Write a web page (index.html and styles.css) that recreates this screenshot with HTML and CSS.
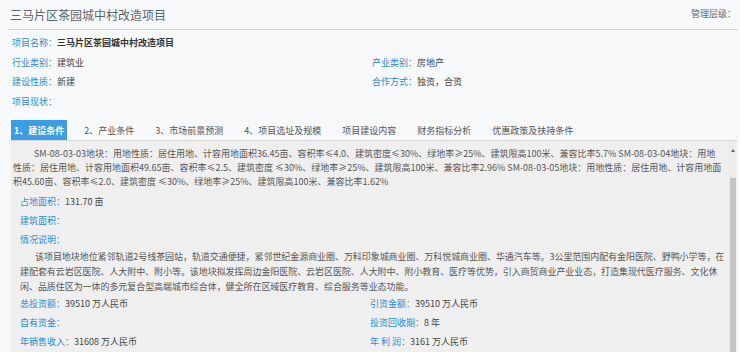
FILE: index.html
```html
<!DOCTYPE html>
<html lang="zh-CN">
<head>
	<meta charset="utf-8">
	<title>三马片区茶园城中村改造项目</title>
	<link rel="stylesheet" href="styles.css">
</head>
<body>
	<div class="page">
		<div class="head">
			<h1 class="title">三马片区茶园城中村改造项目</h1>
			<span class="level">管理层级：</span>
		</div>

		<div class="info">
			<div class="field wide"><span class="lbl">项目名称：</span><span class="val strong">三马片区茶园城中村改造项目</span></div>
			<div class="field"><span class="lbl">行业类别：</span><span class="val">建筑业</span></div>
			<div class="field"><span class="lbl">产业类别：</span><span class="val">房地产</span></div>
			<div class="field"><span class="lbl">建设性质：</span><span class="val">新建</span></div>
			<div class="field"><span class="lbl">合作方式：</span><span class="val">独资，合资</span></div>
			<div class="field wide"><span class="lbl">项目现状：</span></div>
		</div>

		<div class="tabs">
			<span class="tab active">1、建设条件</span>
			<span class="tab">2、产业条件</span>
			<span class="tab">3、市场前景预测</span>
			<span class="tab">4、项目选址及规模</span>
			<span class="tab">项目建设内容</span>
			<span class="tab">财务指标分析</span>
			<span class="tab">优惠政策及扶持条件</span>
		</div>

		<div class="panel">
			<div class="panel-body">
				<p class="plots">SM-08-03-03地块：用地性质：居住用地、计容用地面积36.45亩、容积率≤4.0、建筑密度≤30%、绿地率≥25%、建筑限高100米、兼容比率5.7% SM-08-03-04地块：用地性质：居住用地、计容用地面积49.65亩、容积率≤2.5、建筑密度 ≤30%、绿地率≥25%、建筑限高100米、兼容比率2.96% SM-08-03-05地块：用地性质：居住用地、计容用地面积45.60亩、容积率≤2.0、建筑密度 ≤30%、绿地率≥25%、建筑限高100米、兼容比率1.62%</p>

				<div class="fields">
					<div class="field wide"><span class="lbl">占地面积：</span><span class="val">131.70 亩</span></div>
					<div class="field wide"><span class="lbl">建筑面积：</span></div>
					<div class="field wide"><span class="lbl">情况说明：</span></div>
				</div>

				<p class="desc">该项目地块地位紧邻轨道2号线茶园站，轨道交通便捷，紧邻世纪金源商业圈、万科印象城商业圈、万科悦城商业圈、华通汽车等。3公里范围内配有金阳医院、野鸭小学等，在建配套有云岩区医院、人大附中、附小等。该地块拟发挥周边金阳医院、云岩区医院、人大附中、附小教育、医疗等优势，引入商贸商业产业业态，打造集现代医疗服务、文化休闲、品质住区为一体的多元复合型高端城市综合体，健全所在区域医疗教育、综合服务等业态功能。</p>

				<div class="fields">
					<div class="field"><span class="lbl">总投资额：</span><span class="val">39510 万人民币</span></div>
					<div class="field"><span class="lbl">引资金额：</span><span class="val">39510 万人民币</span></div>
					<div class="field"><span class="lbl">自有资金：</span></div>
					<div class="field"><span class="lbl">投资回收期：</span><span class="val">8 年</span></div>
					<div class="field"><span class="lbl">年销售收入：</span><span class="val">31608 万人民币</span></div>
					<div class="field"><span class="lbl">年 利 润：</span><span class="val">3161 万人民币</span></div>
				</div>
			</div>
			<div class="scrollbar">
				<div class="sb-arrow"></div>
				<div class="sb-thumb"></div>
			</div>
		</div>
	</div>
</body>
</html>
```

FILE: styles.css
```css
html, body {
	margin: 0px;
	padding: 0px;
	width: 100%;
	height: 100%;
	overflow: hidden;
}

body {
	background-color: #f7f8f9;
	font-family: "Noto Sans CJK SC", "Noto Sans", sans-serif;
	font-size: 9px;
	color: #444;
}

.page {
	padding: 0px 3px 0px 8px;
}

/* header */
.head {
	display: flex;
	justify-content: space-between;
	align-items: center;
	height: 29px;
	border-bottom: 1px solid #c9d3dd;
	padding: 0px 1px 0px 2px;
}

.title {
	margin: 0px;
	font-size: 12px;
	font-weight: normal;
	line-height: 29px;
	color: #5a6570;
}

.level {
	color: #666;
	margin-bottom: 2px;
}

/* fields */
.info {
	display: grid;
	grid-template-columns: 360px 1fr;
	padding: 3px 0px 0px 4px;
}

.field {
	line-height: 19.5px;
	white-space: nowrap;
}

.wide {
	grid-column: 1 / -1;
}

.lbl {
	color: #2b8bd4;
}

.val {
	color: #444;
}

.strong {
	font-weight: bold;
	color: #333;
}

/* tabs */
.tabs {
	display: flex;
	margin-top: 9px;
	padding-left: 3px;
	height: 20px;
}

.tab {
	display: flex;
	align-items: center;
	padding: 0px 3px;
	margin-right: 15px;
	color: #555;
}

.tab.active {
	background-color: #3d9de4;
	color: #fff;
	font-weight: bold;
	margin-right: 14px;
}

/* content panel */
.panel {
	display: flex;
	margin-left: 3px;
	background-color: #efefef;
	border-top: 1px solid #d6d6d6;
	height: 220px;
}

.panel-body {
	flex: 1;
	padding: 6px 1px 0px 2px;
}

.panel-body p {
	margin: 0px;
	color: #555;
}

.plots {
	line-height: 14px;
	text-indent: 21px;
	padding-right: 5px;
	word-break: break-all;
}

.fields {
	display: grid;
	grid-template-columns: 350px 1fr;
	padding-left: 7px;
}

.fields .field {
	line-height: 19px;
}

.plots + .fields {
	margin-top: 3px;
}

.desc {
	line-height: 15px;
	padding-left: 7px;
	text-indent: 15px;
	letter-spacing: -0.06px;
}

/* fake scrollbar */
.scrollbar {
	width: 7px;
	margin-right: 1px;
	display: flex;
	flex-direction: column;
	align-items: center;
	background-color: #ececec;
}

.sb-arrow {
	margin-top: 8px;
	width: 0px;
	height: 0px;
	border-left: 2px solid transparent;
	border-right: 2px solid transparent;
	border-bottom: 3px solid #666;
}

.sb-thumb {
	margin-top: 26px;
	width: 6px;
	flex: 1;
	background-color: #c4c4c4;
}
```
